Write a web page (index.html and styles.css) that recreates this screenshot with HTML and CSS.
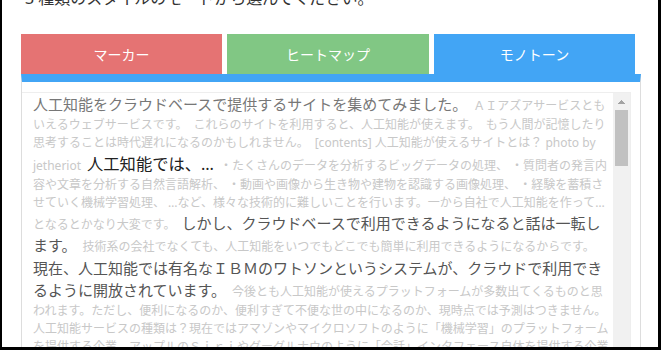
FILE: index.html
```html
<!DOCTYPE html>
<html lang="ja">
<head>
  <meta charset="UTF-8">
  <meta name="viewport" content="width=device-width, initial-scale=1.0">
  <title>要約ビューア</title>
  <link rel="stylesheet" href="styles.css">
</head>
<body>
<div class="window">
  <div class="page">
    <p class="lead">3 種類のスタイルのモードから選んでください。</p>
    <div class="tabs">
      <button type="button" class="tab tab-marker">マーカー</button>
      <button type="button" class="tab tab-heat">ヒートマップ</button>
      <button type="button" class="tab tab-mono">モノトーン</button>
    </div>
    <div class="panel">
      <div class="summary-box">
        <div class="summary">
          <span class="lv2">人工知能をクラウドベースで提供するサイトを集めてみました。</span>
          <span class="lv0">ＡＩアズアサービスともいえるウェブサービスです。</span>
          <span class="lv0">これらのサイトを利用すると、人工知能が使えます。</span>
          <span class="lv0">もう人間が記憶したり思考することは時代遅れになるのかもしれません。</span>
          <span class="lv0">[contents] 人工知能が使えるサイトとは？ photo by jetheriot</span>
          <span class="lv4">人工知能では、…</span>
          <span class="lv0">・たくさんのデータを分析するビッグデータの処理、 ・質問者の発言内容や文章を分析する自然言語解析、 ・動画や画像から生き物や建物を認識する画像処理、 ・経験を蓄積させていく機械学習処理、 …など、様々な技術的に難しいことを行います。</span><span
            class="lv0">一から自社で人工知能を作って…となるとかなり大変です。</span>
          <span class="lv3">しかし、クラウドベースで利用できるようになると話は一転します。</span>
          <span class="lv0">技術系の会社でなくても、人工知能をいつでもどこでも簡単に利用できるようになるからです。</span>
          <span class="lv3">現在、人工知能では有名なＩＢＭのワトソンというシステムが、クラウドで利用できるように開放されています。</span>
          <span class="lv0">今後とも人工知能が使えるプラットフォームが多数出てくるものと思われます。</span><span
            class="lv0">ただし、便利になるのか、便利すぎて不便な世の中になるのか、現時点では予測はつきません。</span>
          <span class="lv0 heading">　&#8288;人工知能サービスの種類は？</span><span
            class="lv0">現在ではアマゾンやマイクロソフトのように「機械学習」のプラットフォームを提供する企業、アップルのＳｉｒｉやグーグルナウのように「会話」インタフェース自体を提供する企業などがあります。</span>
        </div>
        <div class="scrollbar">
          <div class="scroll-up"></div>
          <div class="scroll-thumb"></div>
        </div>
      </div>
    </div>
  </div>
</div>
</body>
</html>
```
FILE: styles.css
```css
body {
  margin: 0;
  font-family: "Noto Sans", "Noto Sans CJK JP", sans-serif;
  background: #fff;
}
.window {
  height: 350px;
  box-sizing: border-box;
  border: solid #000;
  border-width: 0 3px 3px 2px;
  overflow: hidden;
}
.page {
  margin-top: -14px;
  padding-left: 19px;
}
.lead {
  margin: 0 0 24px;
  padding-left: 4px;
  font-size: 16px;
  line-height: 24px;
  color: #333;
}
.tabs {
  display: flex;
  gap: 5px;
}
.tab {
  width: 201px;
  height: 40px;
  border: 0;
  padding: 0;
  font-family: inherit;
  font-size: 14px;
  color: #fff;
}
.tab-marker {
  background: #e57373;
}
.tab-heat {
  width: 202px;
  background: #81c784;
}
.tab-mono {
  background: #42a5f5;
}
.panel {
  width: 620px;
  box-sizing: border-box;
  border-top: 8px solid #42a5f5;
  border-left: 1px solid #ddd;
  border-right: 1px solid #ddd;
  padding: 10px 9px 0 0;
}
.summary-box {
  display: flex;
  height: 300px;
  border: 1px solid #eee;
  border-left: 0;
}
.summary {
  flex: 1;
  overflow: hidden;
  padding: 0 2.5px 0 11px;
  font-size: 12px;
  line-height: 1.5;
  word-spacing: 2.88px;
}
.summary span {
  word-spacing: normal;
}
/* keep the full-width indent at the start of the line */
.summary .heading {
  text-spacing-trim: space-all;
}
.scrollbar {
  width: 17px;
  background: #f1f1f1;
}
.scroll-up {
  height: 17px;
  background-image: conic-gradient(from 139deg at 50% 0, #a3a3a3 82deg, transparent 0);
  background-size: 7px 4px;
  background-position: center;
  background-repeat: no-repeat;
}
.scroll-thumb {
  height: 56px;
  margin: 0 2px;
  background: #c1c1c1;
}
.lv0 {
  font-size: 12px;
  color: #c8c8c8;
}
.lv2 {
  font-size: 15px;
  color: #777;
}
.lv3 {
  font-size: 15px;
  color: #555;
}
.lv4 {
  font-size: 16.3px;
  color: #222;
}
```
